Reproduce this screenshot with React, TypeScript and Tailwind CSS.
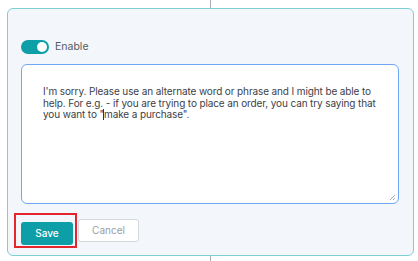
import React, { useState } from "react"

const App = () => {
  const [enabled, setEnabled] = useState(true)

  return (
    <div className="w-[418px] h-[261px] bg-white overflow-hidden" style={{ fontFamily: "Inter, 'Liberation Sans', sans-serif" }}>
      {/* connector line above */}
      <div className="ml-[210px] w-px h-[8px] bg-[#a9adb3]" />

      <div className="ml-[7px] w-[407px] h-[248px] rounded-[6px] border-[1.5px] border-[#7ccfd3] bg-[#f3f6fa] pt-[31px] pl-[13px] pr-[13px]">
        {/* Enable toggle */}
        <div className="flex items-center gap-[6px] h-[14px]">
          <button
            onClick={() => setEnabled(!enabled)}
            className={`relative w-[28px] h-[14px] rounded-full ${enabled ? "bg-[#0e9ea8]" : "bg-gray-300"}`}
          >
            <span className={`absolute top-[2px] w-[10px] h-[10px] rounded-full bg-white ${enabled ? "left-[16px]" : "left-[2px]"}`} />
          </button>
          <span className="text-[10.5px] text-[#555b61]">Enable</span>
        </div>

        {/* Message box */}
        <div className="relative mt-[10px] w-[378px] h-[140px] rounded-[6px] border-[1.5px] border-[#6ea7f6] bg-white pl-[21px] pr-[12px] pt-[21px]">
          <p className="text-[10px] leading-[11.7px] tracking-[-0.12px] text-[#3c4148]">
            I'm sorry. Please use an alternate word or phrase and I might be able to help. For e.g. - if you are trying to place an order, you can try saying that you want to "<span className="inline-block w-px h-[11px] bg-[#333] align-[-2px] -ml-px" />make a purchase".
          </p>
          <svg className="absolute right-[2px] bottom-[2px]" width="7" height="7" viewBox="0 0 7 7">
            <path d="M6 1L1 6M6 4L4 6" stroke="#aaa" strokeWidth="1" />
          </svg>
        </div>

        {/* Actions */}
        <div className="flex gap-[5px] mt-[15px]">
          <div className="relative">
            <div className="absolute -left-[7px] -top-[6px] w-[63px] h-[35px] border-2 border-[#e3262e]" />
            <button className="w-[52px] h-[23px] rounded-[3px] bg-[#0e9ea8] text-white text-[10px] font-medium">Save</button>
          </div>
          <button className="w-[61px] h-[23px] rounded-[3px] border border-[#d4d7db] bg-white text-[#9a9ea4] text-[10px]">Cancel</button>
        </div>
      </div>

      {/* connector line below */}
      <div className="ml-[210px] w-px h-[5px] bg-[#a9adb3]" />
    </div>
  )
}

export default App
